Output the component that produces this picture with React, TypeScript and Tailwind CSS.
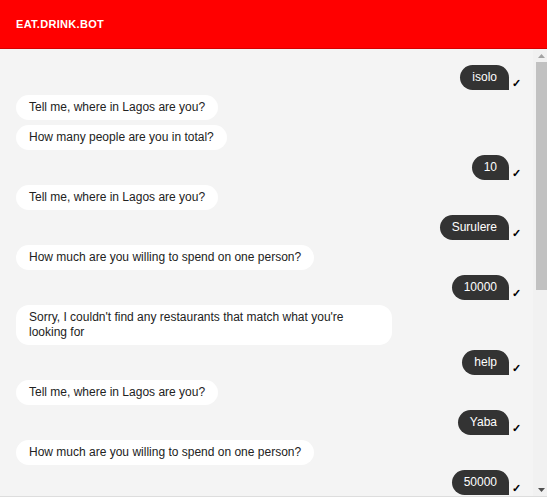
import React from 'react';

type Msg = { from: 'bot' | 'user'; text: string };

const messages: Msg[] = [
  { from: 'user', text: 'isolo' },
  { from: 'bot', text: 'Tell me, where in Lagos are you?' },
  { from: 'bot', text: 'How many people are you in total?' },
  { from: 'user', text: '10' },
  { from: 'bot', text: 'Tell me, where in Lagos are you?' },
  { from: 'user', text: 'Surulere' },
  { from: 'bot', text: 'How much are you willing to spend on one person?' },
  { from: 'user', text: '10000' },
  { from: 'bot', text: "Sorry, I couldn't find any restaurants that match what you're looking for" },
  { from: 'user', text: 'help' },
  { from: 'bot', text: 'Tell me, where in Lagos are you?' },
  { from: 'user', text: 'Yaba' },
  { from: 'bot', text: 'How much are you willing to spend on one person?' },
  { from: 'user', text: '50000' },
];

const Bubble: React.FC<{ msg: Msg }> = ({ msg }) => {
  if (msg.from === 'user') {
    return (
      <div className="flex justify-end items-end pr-[12px]">
        <div className="bg-[#333333] text-white text-[12px] leading-[15px] px-[12px] py-[5px] rounded-[13px] rounded-br-none">
          {msg.text}
        </div>
        <span className="w-[9px] ml-[3px] text-[11px] leading-[13px] font-bold text-black">✓</span>
      </div>
    );
  }
  return (
    <div className="flex justify-start pl-4">
      <div className="bg-white text-[#222222] text-[12px] leading-[15px] px-[13px] py-[5px] rounded-[13px] max-w-[376px]">
        {msg.text}
      </div>
    </div>
  );
};

const Scrollbar = () => (
  <div className="w-[14px] shrink-0 bg-[#f1f1f1] flex flex-col">
    <div className="h-[13px] flex items-center justify-center pl-[3px]">
      <svg width="7" height="4" viewBox="0 0 7 4"><path d="M0 4 L3.5 0 L7 4 Z" fill="#a3a3a3" /></svg>
    </div>
    <div className="h-[228px] ml-[3px] bg-[#c1c1c1]" />
    <div className="flex-1" />
    <div className="h-[13px] flex items-center justify-center pl-[3px]">
      <svg width="7" height="4" viewBox="0 0 7 4"><path d="M0 0 L3.5 4 L7 0 Z" fill="#505050" /></svg>
    </div>
  </div>
);

export default function App() {
  return (
    <div className="h-screen flex flex-col bg-white" style={{ fontFamily: '"Liberation Sans", Arial, sans-serif' }}>
      <header className="h-[49px] shrink-0 bg-[#ff0000] border-b border-[#d60000] flex items-center px-4">
        <h1 className="text-white font-bold text-[11px] tracking-[0.3px]">EAT.DRINK.BOT</h1>
      </header>
      <main className="h-[448px] shrink-0 flex bg-[#f4f4f4] border-b border-[#dddddd]">
        <div className="flex-1 overflow-hidden">
          <div className="flex flex-col gap-[5px] pt-4 pb-4">
            {messages.map((m, i) => (
              <Bubble key={i} msg={m} />
            ))}
          </div>
        </div>
        <Scrollbar />
      </main>
    </div>
  );
}
